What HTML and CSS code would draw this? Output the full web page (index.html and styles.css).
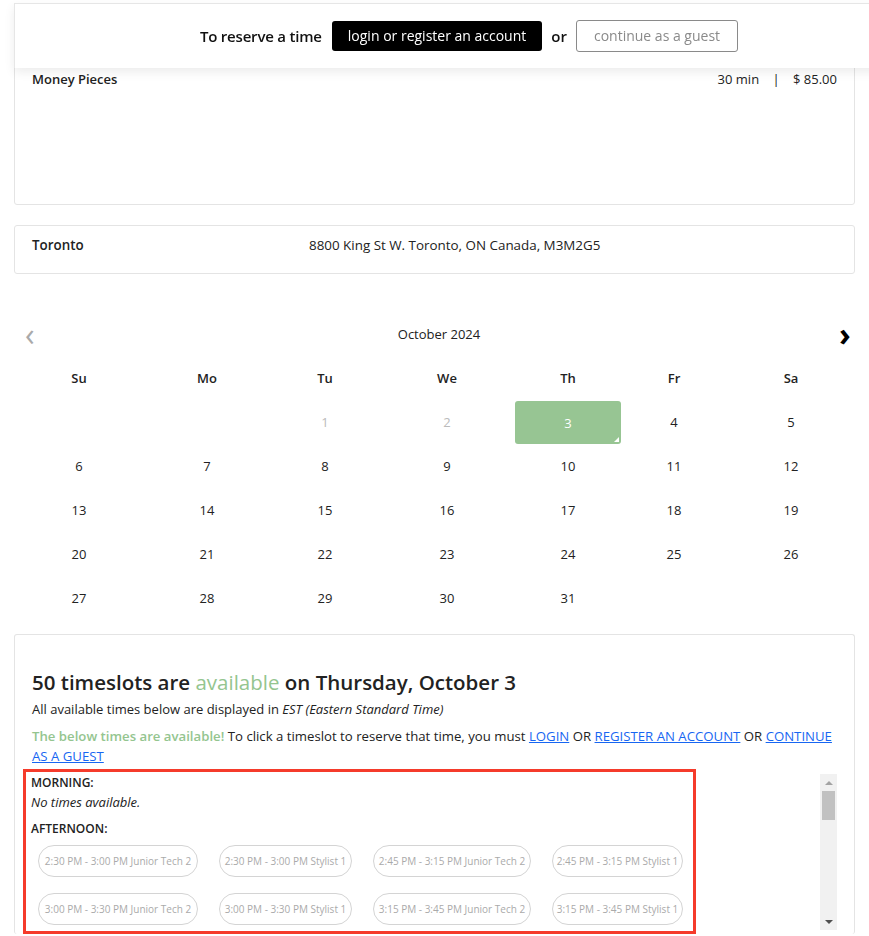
FILE: index.html
```html
<!DOCTYPE html>
<html lang="en">

<head>
    <meta charset="UTF-8" />
    <meta name="viewport" content="width=device-width, initial-scale=1.0" />
    <title>Book an appointment</title>
    <link rel="stylesheet" href="styles.css">
</head>

<body>
    <div class="reserve-bar">
        <span class="reserve-label">To reserve a time</span>
        <a href="#" class="btn-login">login or register an account</a>
        <span class="reserve-or">or</span>
        <a href="#" class="btn-guest">continue as a guest</a>
    </div>

    <div class="page">
        <div class="card service-card">
            <div class="service-name">Money Pieces</div>
            <div class="service-meta">30 min <span class="sep">|</span> $ 85.00</div>
        </div>

        <div class="card location-card">
            <div class="location-name">Toronto</div>
            <div class="location-address">8800 King St W. Toronto, ON Canada, M3M2G5</div>
        </div>

        <div class="calendar">
            <div class="month-row">
                <span class="month-nav prev">&#8249;</span>
                <span class="month-title">October 2024</span>
                <span class="month-nav next">&#8250;</span>
            </div>
            <div class="cal-grid">
                <div class="cal-head">Su</div>
                <div class="cal-head">Mo</div>
                <div class="cal-head">Tu</div>
                <div class="cal-head">We</div>
                <div class="cal-head">Th</div>
                <div class="cal-head">Fr</div>
                <div class="cal-head">Sa</div>

                <div class="cal-day"></div>
                <div class="cal-day"></div>
                <div class="cal-day past">1</div>
                <div class="cal-day past">2</div>
                <div class="cal-day"><span class="selected">3</span></div>
                <div class="cal-day">4</div>
                <div class="cal-day">5</div>

                <div class="cal-day">6</div>
                <div class="cal-day">7</div>
                <div class="cal-day">8</div>
                <div class="cal-day">9</div>
                <div class="cal-day">10</div>
                <div class="cal-day">11</div>
                <div class="cal-day">12</div>

                <div class="cal-day">13</div>
                <div class="cal-day">14</div>
                <div class="cal-day">15</div>
                <div class="cal-day">16</div>
                <div class="cal-day">17</div>
                <div class="cal-day">18</div>
                <div class="cal-day">19</div>

                <div class="cal-day">20</div>
                <div class="cal-day">21</div>
                <div class="cal-day">22</div>
                <div class="cal-day">23</div>
                <div class="cal-day">24</div>
                <div class="cal-day">25</div>
                <div class="cal-day">26</div>

                <div class="cal-day">27</div>
                <div class="cal-day">28</div>
                <div class="cal-day">29</div>
                <div class="cal-day">30</div>
                <div class="cal-day">31</div>
                <div class="cal-day"></div>
                <div class="cal-day"></div>
            </div>
        </div>

        <div class="card slots-card">
            <h2>50 timeslots are <span class="green">available</span> on Thursday, October 3</h2>
            <p class="tz-note">All available times below are displayed in <em>EST (Eastern Standard Time)</em></p>
            <p class="login-note">
                <span class="green-strong">The below times are available!</span> To click a timeslot to reserve that time, you must
                <a href="#">LOGIN</a> OR <a href="#">REGISTER AN ACCOUNT</a> OR <a href="#">CONTINUE AS A GUEST</a>
            </p>

            <div class="slots-row">
                <div class="slots-box">
                    <div class="period">MORNING:</div>
                    <div class="no-times">No times available.</div>
                    <div class="period afternoon">AFTERNOON:</div>
                    <div class="slot-grid">
                        <span class="slot">2:30 PM - 3:00 PM Junior Tech 2</span>
                        <span class="slot">2:30 PM - 3:00 PM Stylist 1</span>
                        <span class="slot">2:45 PM - 3:15 PM Junior Tech 2</span>
                        <span class="slot">2:45 PM - 3:15 PM Stylist 1</span>
                        <span class="slot">3:00 PM - 3:30 PM Junior Tech 2</span>
                        <span class="slot">3:00 PM - 3:30 PM Stylist 1</span>
                        <span class="slot">3:15 PM - 3:45 PM Junior Tech 2</span>
                        <span class="slot">3:15 PM - 3:45 PM Stylist 1</span>
                    </div>
                </div>
                <div class="scrollbar">
                    <span class="sb-btn"><span class="sb-up"></span></span>
                    <span class="sb-thumb"></span>
                    <span class="sb-space"></span>
                    <span class="sb-btn"><span class="sb-down"></span></span>
                </div>
            </div>
        </div>
    </div>
</body>

</html>
```

FILE: styles.css
```css
body {
    font-family: "Open Sans", "Liberation Sans", sans-serif;
    margin: 0;
    padding: 0;
    background: #fff;
    color: #222;
    font-size: 13px;
    overflow: hidden;
}

a {
    text-decoration: none;
}

/* top overlay bar */
.reserve-bar {
    position: fixed;
    top: 3px;
    left: 14px;
    width: 908px;
    height: 64px;
    background: #fff;
    border-top: 1px solid #e6e6e6;
    border-left: 1px solid #e6e6e6;
    box-shadow: 0 4px 10px rgba(0, 0, 0, 0.08);
    display: flex;
    align-items: center;
    justify-content: center;
    z-index: 10;
}

.reserve-label {
    font-size: 15px;
    font-weight: 600;
    color: #111;
    margin-right: 10px;
    letter-spacing: -0.2px;
}

.btn-login {
    background: #000;
    color: #fff;
    height: 30px;
    line-height: 30px;
    padding: 0 16px;
    border-radius: 3px;
    font-size: 14px;
    font-weight: 500;
}

.reserve-or {
    font-size: 15px;
    font-weight: 600;
    color: #111;
    margin: 0 9px;
}

.btn-guest {
    color: #8a8a8a;
    height: 30px;
    line-height: 30px;
    padding: 0 17px;
    border: 1px solid #8a8a8a;
    border-radius: 3px;
    font-size: 14px;
}

.page {
    padding: 50px 14px 0;
}

.card {
    border: 1px solid #e4e4e4;
    border-radius: 3px;
    background: #fff;
}

.service-card {
    display: flex;
    justify-content: space-between;
    height: 155px;
    box-sizing: border-box;
    padding: 19px 17px;
    line-height: 18px;
}

.service-name,
.location-name {
    font-weight: 600;
}

.service-meta .sep {
    margin: 0 10px;
}

.location-card {
    margin-top: 20px;
    display: grid;
    grid-template-columns: 277px 1fr;
    height: 49px;
    box-sizing: border-box;
    padding: 10px 17px 0;
    line-height: 18px;
    font-size: 13.4px;
}

/* calendar */
.calendar {
    margin: 38px 0 0 1px;
}

.month-row {
    display: flex;
    justify-content: space-between;
    align-items: center;
    height: 44px;
    padding: 0 2px 0 10px;
}

.month-title {
    font-weight: 500;
}

.month-nav {
    font-size: 32px;
    line-height: 30px;
    color: #aaa;
    width: 14px;
}

.month-nav.next {
    color: #000;
    font-weight: 700;
}

.cal-grid {
    display: grid;
    grid-template-columns: 128px 128px 108px 136px 106px 106px 128px;
    grid-auto-rows: 44px;
}

.cal-head,
.cal-day {
    display: flex;
    align-items: center;
    justify-content: center;
}

.cal-head {
    font-weight: 600;
}

.cal-day.past {
    color: #bbb;
}

.selected {
    position: relative;
    display: flex;
    align-items: center;
    justify-content: center;
    width: 100%;
    height: 43px;
    margin-top: 1px;
    background: #97c593;
    border-radius: 3px;
    color: #fff;
}

.selected::after {
    content: "";
    position: absolute;
    right: 2px;
    bottom: 2px;
    border-left: 5px solid transparent;
    border-bottom: 5px solid #fff;
}

/* timeslots */
.slots-card {
    margin-top: 14px;
    padding: 33px 17px 0;
    border-bottom: none;
}

.slots-card h2 {
    margin: 0;
    font-size: 20.5px;
    line-height: 28px;
    font-weight: 600;
}

.green {
    color: #94c58f;
    font-weight: 500;
}

.tz-note {
    margin: 4px 0 0;
    line-height: 18px;
}

.login-note {
    margin: 8px 0 0;
    line-height: 20px;
    font-size: 13.2px;
}

.green-strong {
    color: #94c58f;
    font-weight: 600;
}

.login-note a {
    color: #1766f2;
    text-decoration: underline;
}

.slots-row {
    display: flex;
    justify-content: space-between;
    align-items: flex-start;
    margin: 3px 0 0 -9px;
}

.slots-box {
    width: 662px;
    border: 3px solid #f53b2b;
    padding: 2px 0 6px 5px;
    box-sizing: content-box;
}

.period {
    font-weight: 600;
    font-size: 12px;
    line-height: 18px;
}

.period.afternoon {
    margin-top: 8px;
}

.no-times {
    font-style: italic;
    line-height: 20px;
}

.slot-grid {
    display: grid;
    grid-template-columns: 160px 133px 158px 131px;
    column-gap: 21px;
    row-gap: 16px;
    margin: 7px 0 0 7px;
}

.slot {
    height: 32px;
    box-sizing: border-box;
    border: 1px solid #d4d4d4;
    border-radius: 16px;
    font-size: 10px;
    color: #aaa;
    display: flex;
    align-items: center;
    justify-content: center;
    white-space: nowrap;
}

.scrollbar {
    display: flex;
    flex-direction: column;
    width: 17px;
    height: 156px;
    margin-top: 5px;
    background: #f1f1f1;
}

.sb-btn {
    height: 17px;
    display: flex;
    align-items: center;
    justify-content: center;
}

.sb-up {
    border-left: 4px solid transparent;
    border-right: 4px solid transparent;
    border-bottom: 4px solid #a3a3a3;
}

.sb-down {
    border-left: 4px solid transparent;
    border-right: 4px solid transparent;
    border-top: 4px solid #505050;
}

.sb-thumb {
    height: 29px;
    margin: 0 2px;
    background: #c1c1c1;
}

.sb-space {
    flex: 1;
}
```
